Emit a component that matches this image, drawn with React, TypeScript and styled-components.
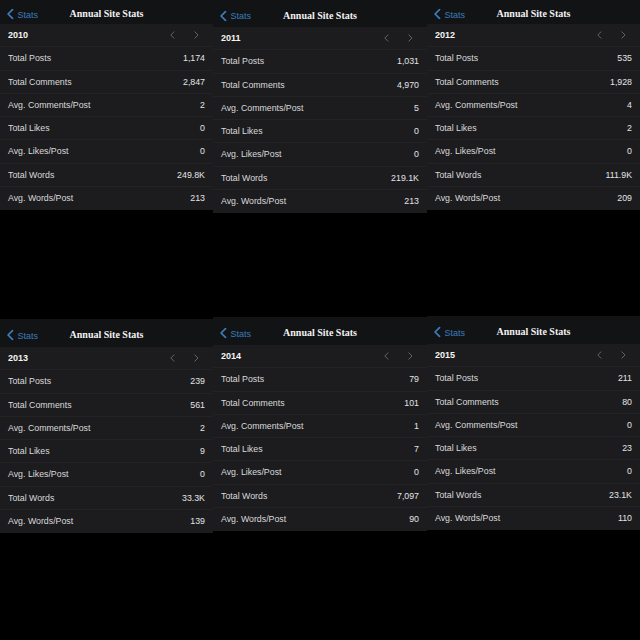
import React from "react";
import styled, { createGlobalStyle } from "styled-components";

const GlobalStyle = createGlobalStyle`
  html, body {
    margin: 0;
    padding: 0;
    background: #000;
  }
  body {
    font-family: "Liberation Sans", Arial, sans-serif;
  }
`;

const Page = styled.main`
  width: 640px;
  height: 640px;
  background: #000;
  display: grid;
  grid-template-columns: 213px 214px 213px;
  grid-template-rows: 316px 324px;
  overflow: hidden;
`;

const Screen = styled.section<{ $offset: number }>`
  margin-top: ${(p) => p.$offset}px;
  display: flex;
  flex-direction: column;
  align-self: start;
`;

const NavBar = styled.header<{ $height: number }>`
  height: ${(p) => p.$height}px;
  background: #121315;
  position: relative;
  display: flex;
  align-items: center;
  justify-content: center;
  padding-top: 3px;
  box-sizing: border-box;
`;

const BackLink = styled.a`
  position: absolute;
  left: 7px;
  top: 50%;
  transform: translateY(-50%);
  margin-top: 2px;
  display: flex;
  align-items: center;
  gap: 4px;
  color: #3a7cbc;
  font-size: 9px;
  text-decoration: none;
`;

const Title = styled.h1`
  margin: 0;
  font-family: "Liberation Serif", "Times New Roman", serif;
  font-weight: 700;
  font-size: 10px;
  color: #f2f2f2;
`;

const Body = styled.div`
  background: #1c1c1e;
  display: flex;
  flex-direction: column;
`;

const Row = styled.div`
  height: 23.25px;
  box-sizing: border-box;
  display: flex;
  align-items: center;
  justify-content: space-between;
  padding: 0 8px;
  font-size: 8.8px;
  color: #dadadc;
  border-bottom: 1px solid #232325;
  &:last-child {
    border-bottom: none;
  }
`;

const Year = styled.span`
  font-weight: 700;
  font-size: 9px;
  color: #f4f4f4;
`;

const Pager = styled.div`
  display: flex;
  gap: 19px;
  margin-right: 6px;
`;

const Value = styled.span`
  color: #e4e4e6;
`;

const Chevron = ({ dir, color, size, weight }: { dir: "l" | "r"; color: string; size: number; weight: number }) => (
  <svg width={size * 0.6} height={size} viewBox="0 0 6 10" fill="none">
    <path
      d={dir === "l" ? "M5 1 L1 5 L5 9" : "M1 1 L5 5 L1 9"}
      stroke={color}
      strokeWidth={weight}
      strokeLinecap="round"
      strokeLinejoin="round"
    />
  </svg>
);

type YearStats = {
  year: number;
  offset: number;
  nav: number;
  values: string[];
};

const labels = [
  "Total Posts",
  "Total Comments",
  "Avg. Comments/Post",
  "Total Likes",
  "Avg. Likes/Post",
  "Total Words",
  "Avg. Words/Post",
];

const stats: YearStats[] = [
  { year: 2010, offset: 0, nav: 24, values: ["1,174", "2,847", "2", "0", "0", "249.8K", "213"] },
  { year: 2011, offset: 0, nav: 27, values: ["1,031", "4,970", "5", "0", "0", "219.1K", "213"] },
  { year: 2012, offset: 0, nav: 24, values: ["535", "1,928", "4", "2", "0", "111.9K", "209"] },
  { year: 2013, offset: 3, nav: 28, values: ["239", "561", "2", "9", "0", "33.3K", "139"] },
  { year: 2014, offset: 1, nav: 28, values: ["79", "101", "1", "7", "0", "7,097", "90"] },
  { year: 2015, offset: 0, nav: 28, values: ["211", "80", "0", "23", "0", "23.1K", "110"] },
];

const StatsScreen = ({ s }: { s: YearStats }) => (
  <Screen $offset={s.offset}>
    <NavBar $height={s.nav}>
      <BackLink>
        <Chevron dir="l" color="#3a7cbc" size={11} weight={1.6} />
        Stats
      </BackLink>
      <Title>Annual Site Stats</Title>
    </NavBar>
    <Body>
      <Row>
        <Year>{s.year}</Year>
        <Pager>
          <Chevron dir="l" color="#6e6e72" size={8} weight={1.1} />
          <Chevron dir="r" color="#6e6e72" size={8} weight={1.1} />
        </Pager>
      </Row>
      {labels.map((label, i) => (
        <Row key={label}>
          <span>{label}</span>
          <Value>{s.values[i]}</Value>
        </Row>
      ))}
    </Body>
  </Screen>
);

const App = () => (
  <>
    <GlobalStyle />
    <Page>
      {stats.map((s) => (
        <StatsScreen key={s.year} s={s} />
      ))}
    </Page>
  </>
);

export default App;
